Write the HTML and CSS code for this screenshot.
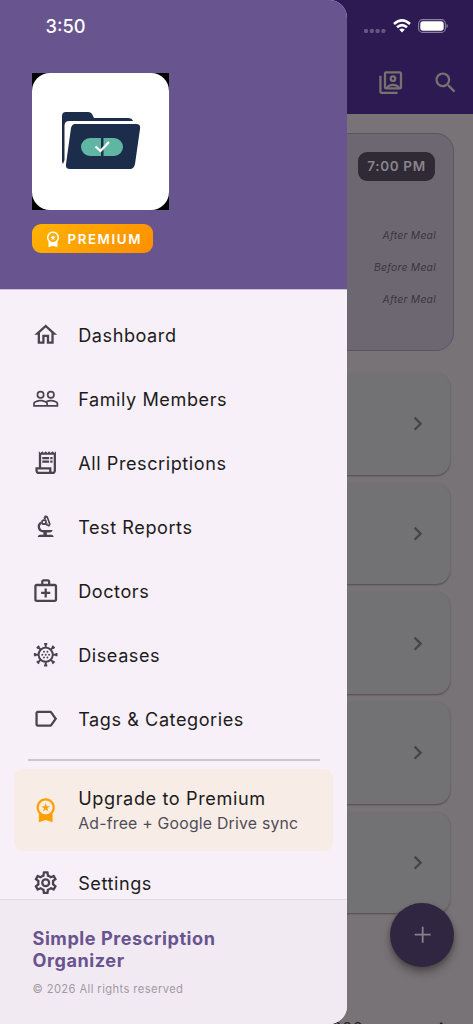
FILE: index.html
```html
<!DOCTYPE html>
<html lang="en">
<head>
<meta charset="utf-8">
<title>Simple Prescription Organizer</title>
<link rel="stylesheet" href="styles.css">
</head>
<body>
<svg class="defs" aria-hidden="true">
  <symbol id="chevron" viewBox="0 0 24 24"><path d="M10 6L8.590 7.410 13.170 12l-4.580 4.590L10 18l6-6z"/></symbol>
  <symbol id="award" viewBox="0 0 24 24"><path d="M9.680 13.690L12 11.930l2.310 1.760-.88-2.850L15.750 9h-2.840L12 6.190 11.090 9H8.250l2.310 1.840-.88 2.850zM20 10c0-4.420-3.580-8-8-8s-8 3.580-8 8c0 2.030.76 3.870 2 5.280V23l6-2 6 2v-7.720c1.240-1.410 2-3.250 2-5.280zm-8-6c3.310 0 6 2.690 6 6s-2.690 6-6 6-6-2.690-6-6 2.690-6 6-6z"/></symbol>
</svg>
<div class="phone">
  <main class="app">
    <header class="appbar">
      <svg class="icon" viewBox="0 0 24 24"><path d="M4 6H2v14c0 1.100.9 2 2 2h14v-2H4z"/><g fill="none" stroke="currentColor" stroke-width="2"><rect x="7" y="3" width="14" height="14" rx="1"/><circle cx="14" cy="8.500" r="2"/><path d="M8.500 17c1.200-2 3.200-3 5.500-3s4.300 1 5.500 3"/></g></svg>
      <svg class="icon" viewBox="0 0 24 24"><path d="M15.500 14h-.79l-.28-.27A6.471 6.471 0 0 0 16 9.500 6.500 6.500 0 1 0 9.500 16c1.610 0 3.090-.59 4.230-1.570l.27.28v.79l5 4.990L20.490 19l-4.990-5zm-6 0C7.010 14 5 11.990 5 9.500S7.010 5 9.500 5 14 7.010 14 9.500 11.990 14 9.500 14z"/></svg>
    </header>
    <section class="dose-card">
      <span class="time">7:00 PM</span>
      <ul class="doses"><li>After Meal</li><li>Before Meal</li><li>After Meal</li></ul>
    </section>
    <section class="cards">
      <div class="card"><svg class="icon"><use href="#chevron"/></svg></div>
      <div class="card"><svg class="icon"><use href="#chevron"/></svg></div>
      <div class="card"><svg class="icon"><use href="#chevron"/></svg></div>
      <div class="card"><svg class="icon"><use href="#chevron"/></svg></div>
      <div class="card"><svg class="icon"><use href="#chevron"/></svg></div>
    </section>
    <div class="date-row"><span>2026</span><svg class="icon"><use href="#chevron"/></svg></div>
  </main>
  <div class="fab"><svg class="icon" viewBox="0 0 24 24"><path d="M19 12.800h-6.200V19h-1.600v-6.200H5v-1.600h6.200V5h1.600v6.200H19z"/></svg></div>

  <aside class="drawer">
    <header class="drawer-head">
      <div class="logo">
        <svg viewBox="0 0 137 137">
          <rect width="137" height="137" rx="18" fill="#fff"/>
          <path d="M31 91q-1-1-1-3V43q0-4 4-4h22q3 0 4 2l2 4h34q4 0 5 3H37q-4 0-4.500 4V87z" fill="#1c2d4b"/>
          <path d="M43 51h61q5 0 4 5l-5 35q-1 5-5 5H38q-5 0-4-5l5-36q1-4 4-4z" fill="#1c2d4b"/>
          <path d="M58 65h11v18H58a9 9 0 0 1 0-18zm13.500 0H82a9 9 0 0 1 0 18H71.500z" fill="#60b6a2"/>
          <path d="M63.500 73.500l5 4.500 8.500-9" fill="none" stroke="#fff" stroke-width="2.300"/>
        </svg>
      </div>
      <div class="badge"><svg><use href="#award"/></svg><span>PREMIUM</span></div>
    </header>
    <nav class="menu">
      <a class="item"><svg class="icon" viewBox="0 0 24 24"><path d="M12 5.690l5 4.500V18h-2v-6H9v6H7v-7.810l5-4.500M12 3L2 12h3v8h6v-6h2v6h6v-8h3L12 3z"/></svg><span>Dashboard</span></a>
      <a class="item"><svg class="icon" viewBox="0 0 24 24"><path d="M16.500 13c-1.200 0-3.070.34-4.500 1-1.430-.67-3.300-1-4.500-1C5.330 13 1 14.080 1 16.250V19h22v-2.750c0-2.170-4.330-3.250-6.500-3.250zm-4 4.500h-10v-1.250c0-.54 2.560-1.750 5-1.750s5 1.210 5 1.750v1.250zm9 0H14v-1.250c0-.46-.2-.86-.52-1.220.88-.3 1.960-.53 3.020-.53 2.440 0 5 1.210 5 1.750v1.250zM7.500 12a3.500 3.500 0 1 0 0-7 3.500 3.500 0 0 0 0 7zm0-5.500a2 2 0 1 1 0 4 2 2 0 0 1 0-4zm9 5.500a3.500 3.500 0 1 0 0-7 3.500 3.500 0 0 0 0 7zm0-5.500a2 2 0 1 1 0 4 2 2 0 0 1 0-4z"/></svg><span>Family Members</span></a>
      <a class="item"><svg class="icon" viewBox="0 0 24 24"><path d="M19.500 3.500L18 2l-1.500 1.500L15 2l-1.500 1.500L12 2l-1.500 1.500L9 2 7.500 3.500 6 2v14H3v3c0 1.660 1.340 3 3 3h12c1.660 0 3-1.340 3-3V2l-1.500 1.500zM15 20H6c-.55 0-1-.45-1-1v-1h10v2zm4-1c0 .55-.45 1-1 1s-1-.45-1-1v-3H8V5h11v14zM9 7h6v2H9zM16 7h2v2h-2zM9 10h6v2H9zM16 10h2v2h-2z"/></svg><span>All Prescriptions</span></a>
      <a class="item"><svg class="icon" viewBox="0 0 24 24"><path d="M7 19c-1.100 0-2 .9-2 2h14c0-1.100-.9-2-2-2h-4v-2h3c1.100 0 2-.9 2-2h-8c-1.660 0-3-1.340-3-3 0-1.090.59-2.040 1.460-2.560C8.170 9.030 8 8.540 8 8c0-.21.04-.42.09-.62A5 5 0 0 0 10 17v2z"/><path fill-rule="evenodd" d="M10.560 5.510A2.500 2.500 0 0 1 12.150 9.870l.59 1.620.94-.34.34.94 1.880-.68-.34-.94.94-.34L13.760 2.600l-.94.34L12.480 2l-1.880.68.34.94-.94.35zM11.900 4.600l.94-.34 2.050 5.640-.94.34z"/><path fill-rule="evenodd" d="M10.500 5.500a2.500 2.500 0 1 0 0 5 2.500 2.500 0 0 0 0-5zm0 1.500a1 1 0 1 1 0 2 1 1 0 0 1 0-2z"/></svg><span>Test Reports</span></a>
      <a class="item"><svg class="icon" viewBox="0 0 24 24"><path d="M20 6h-4V4c0-1.100-.9-2-2-2h-4c-1.100 0-2 .9-2 2v2H4c-1.100 0-2 .9-2 2v12c0 1.100.9 2 2 2h16c1.100 0 2-.9 2-2V8c0-1.100-.9-2-2-2zM10 4h4v2h-4V4zm10 16H4V8h16v12zM13 10h-2v3H8v2h3v3h2v-3h3v-2h-3z"/></svg><span>Doctors</span></a>
      <a class="item"><svg class="icon" viewBox="0 0 24 24"><g fill="none" stroke="currentColor" stroke-width="1.700"><circle cx="12" cy="12" r="6.200"/><path d="M12 6V2.500M12 18v3.500M6 12H2.500M18 12h3.500M7.800 7.800L5.300 5.300M16.200 7.800l2.500-2.500M7.800 16.200l-2.500 2.500M16.200 16.200l2.500 2.500M10.600 2.500h2.800M10.600 21.500h2.800M2.500 10.600v2.800M21.500 10.600v2.800M4.300 6.300l2-2M17.700 4.300l2 2M4.300 17.700l2 2M17.700 19.700l2-2"/></g><circle cx="12" cy="12" r=".85"/><circle cx="9" cy="12" r=".85"/><circle cx="15" cy="12" r=".85"/><circle cx="10.500" cy="9.500" r=".85"/><circle cx="13.500" cy="9.500" r=".85"/><circle cx="10.500" cy="14.500" r=".85"/><circle cx="13.500" cy="14.500" r=".85"/></svg><span>Diseases</span></a>
      <a class="item"><svg class="icon" viewBox="0 0 24 24"><path d="M17.630 5.840C17.270 5.330 16.670 5 16 5L5 5.010C3.900 5.010 3 5.900 3 7v10c0 1.100.9 1.990 2 1.990L16 19c.67 0 1.270-.33 1.630-.84L22 12l-4.370-6.160zM16 17H5V7h11l3.550 5L16 17z"/></svg><span>Tags &amp; Categories</span></a>
      <hr class="divider">
      <a class="upgrade"><svg class="icon"><use href="#award"/></svg><div><span class="up-title">Upgrade to Premium</span><span class="up-sub">Ad-free + Google Drive sync</span></div></a>
      <a class="item"><svg class="icon" viewBox="0 0 24 24"><path d="M19.430 12.980c.04-.32.07-.64.07-.98 0-.34-.03-.66-.07-.98l2.110-1.650c.19-.15.24-.42.12-.64l-2-3.460c-.09-.16-.26-.25-.44-.25-.06 0-.12.01-.17.03l-2.490 1c-.52-.4-1.080-.73-1.690-.98l-.38-2.650C14.460 2.180 14.250 2 14 2h-4c-.25 0-.46.18-.49.42l-.38 2.650c-.61.25-1.170.59-1.690.98l-2.490-1c-.06-.02-.12-.03-.18-.03-.17 0-.34.09-.43.25l-2 3.460c-.13.22-.07.49.12.64l2.110 1.650c-.04.32-.07.65-.07.98 0 .33.03.66.07.98l-2.110 1.650c-.19.15-.24.42-.12.64l2 3.460c.09.16.26.25.44.25.06 0 .12-.01.17-.03l2.490-1c.52.4 1.080.73 1.690.98l.38 2.650c.03.24.24.42.49.42h4c.25 0 .46-.18.49-.42l.38-2.650c.61-.25 1.170-.59 1.690-.98l2.490 1c.06.02.12.03.18.03.17 0 .34-.09.43-.25l2-3.460c.12-.22.07-.49-.12-.64l-2.110-1.650zm-1.980-1.710c.04.31.05.52.05.73 0 .21-.02.43-.05.73l-.14 1.130.89.7 1.080.84-.7 1.210-1.270-.51-1.040-.42-.9.68c-.43.32-.84.56-1.250.73l-1.060.43-.16 1.130-.2 1.350h-1.400l-.19-1.350-.16-1.130-1.060-.43c-.43-.18-.83-.41-1.230-.71l-.91-.7-1.060.43-1.270.51-.7-1.210 1.080-.84.89-.7-.14-1.130c-.03-.31-.05-.54-.05-.74s.02-.43.05-.73l.14-1.130-.89-.7-1.080-.84.7-1.210 1.270.51 1.040.42.9-.68c.43-.32.84-.56 1.250-.73l1.060-.43.16-1.130.2-1.350h1.390l.19 1.350.16 1.130 1.060.43c.43.18.83.41 1.230.71l.91.7 1.060-.43 1.270-.51.7 1.210-1.070.85-.89.7.14 1.130zM12 8a4 4 0 1 0 0 8 4 4 0 0 0 0-8zm0 6a2 2 0 1 1 0-4 2 2 0 0 1 0 4z"/></svg><span>Settings</span></a>
    </nav>
    <footer class="drawer-foot">
      <strong>Simple Prescription Organizer</strong>
      <small>© 2026 All rights reserved</small>
    </footer>
  </aside>

  <div class="statusbar">
    <span class="clock">3:50</span>
    <div class="signals">
      <svg class="dots" viewBox="0 0 22 4"><rect width="4" height="4" rx="1.300"/><rect x="5.800" width="4" height="4" rx="1.300"/><rect x="11.600" width="4" height="4" rx="1.300"/><rect x="17.400" width="4" height="4" rx="1.300"/></svg>
      <svg class="wifi" viewBox="0 0 18 14"><g fill="none" stroke="#fff" stroke-width="2.600"><path d="M1 5Q9-2.200 17 5"/><path d="M4 8.300q5-4.300 10 0"/></g><path d="M6.200 10.600q2.800-2.200 5.600 0L9 13.600z" fill="#fff"/></svg>
      <svg class="battery" viewBox="0 0 30 14"><rect x=".6" y=".6" width="26.800" height="12.800" rx="4" fill="none" stroke="#8c80a0" stroke-width="1.100"/><rect x="2.300" y="2.300" width="23.400" height="9.400" rx="2.700" fill="#fff"/><path d="M28.500 5q1.400.6 1.400 2t-1.400 2z" fill="#8c80a0"/></svg>
    </div>
  </div>
</div>
</body>
</html>
```
FILE: styles.css
```css
* { box-sizing: border-box; }
body { margin: 0; font-family: Inter, "Liberation Sans", sans-serif; }
.defs { position: absolute; width: 0; height: 0; }
.phone { position: relative; width: 473px; height: 1024px; overflow: hidden; background: #787376; }
.icon { width: 27.4px; height: 27.4px; flex: none; fill: currentColor; display: block; }

.app { height: 1024px; overflow: hidden; }
.appbar { height: 114px; padding: 68.5px 14px 0 0; display: flex; justify-content: flex-end; gap: 27px; background: #2e1a52; color: #77716f; }
.dose-card { margin: 19px 19px 0; height: 218px; padding: 18px 18px 0; border: 1px solid #5b5464; border-radius: 18px; background: #6d6772; display: flex; flex-direction: column; align-items: flex-end; }
.time { width: 77px; height: 29px; border-radius: 9px; background: #302a36; color: #89858a; font-size: 13.5px; line-height: 29px; font-weight: 600; text-align: center; letter-spacing: .65px; }
.doses { list-style: none; margin: 38px -1px 0 0; padding: 0; text-align: right; font-size: 10.3px; line-height: 32px; font-style: italic; letter-spacing: .28px; color: #393739; }
.cards { margin: 22.3px 23px 0; display: flex; flex-direction: column; gap: 8.1px; }
.card { height: 101.5px; border-radius: 14px; background: #727174; box-shadow: 0 1px 2px rgba(0,0,0,.35); display: flex; align-items: center; justify-content: flex-end; padding-right: 18.5px; color: #454446; }
.date-row { margin: 103px 18px 0 0; display: flex; justify-content: flex-end; align-items: center; color: #252326; font-size: 16px; line-height: 24px; letter-spacing: .5px; gap: 68px; }
.date-row .icon { width: 24px; height: 24px; }
.fab { position: absolute; left: 390.3px; top: 902.5px; width: 64px; height: 64px; border-radius: 50%; background: #302641; color: #86818a; display: flex; align-items: center; justify-content: center; box-shadow: 0 6px 10px rgba(0,0,0,.28), 0 2px 4px rgba(0,0,0,.2); }

.drawer { position: absolute; left: 0; top: 0; width: 347.3px; height: 1024px; border-radius: 0 18px 18px 0; overflow: hidden; background: #f7f0f8; display: flex; flex-direction: column; color: #1d1b20; }
.drawer-head { height: 289.5px; flex: none; background: #68548e; border-bottom: 1px solid #cbbcdc; padding: 73px 0 0 32px; }
.logo { width: 137px; height: 137px; background: #000; }
.logo svg { display: block; width: 137px; height: 137px; }
.badge { margin-top: 14px; width: 121px; height: 29px; border-radius: 9px; background: linear-gradient(135deg, #ffb300, #ff8f00); color: #fff; display: flex; align-items: center; gap: 5.5px; padding-left: 12px; font-size: 13.3px; font-weight: 600; letter-spacing: 1.6px; }
.badge svg { width: 18px; height: 18px; fill: currentColor; flex: none; }
.menu { flex: 1; min-height: 0; overflow: hidden; padding-top: 13.5px; }
.item { height: 64px; padding-left: 32.3px; display: flex; align-items: center; gap: 18.5px; font-size: 18.1px; letter-spacing: .56px; }
.item .icon { color: #49454f; }
.item span { white-space: nowrap; }
.divider { margin: 8px 27.5px 0 28px; border: 0; height: 1.5px; background: #cdc5d0; }
.upgrade { margin: 8.5px 14px 0; height: 82px; border-radius: 9px; background: #f8ece6; display: flex; align-items: center; gap: 18.5px; padding-left: 18.3px; white-space: nowrap; }
.upgrade .icon { color: #ffa000; }
.up-title, .up-sub { display: block; }
.up-title { font-size: 18.1px; line-height: 27px; letter-spacing: .62px; }
.up-sub { font-size: 15.8px; line-height: 23px; letter-spacing: .22px; color: #504c56; }
.drawer-foot { height: 125px; flex: none; border-top: 1px solid #e0dae2; background: #f2eaf3; padding: 27px 100px 0 32.5px; }
.drawer-foot strong { display: block; font-size: 18.1px; line-height: 22px; font-weight: 700; color: #68548e; letter-spacing: .55px; }
.drawer-foot small { display: block; margin-top: 11px; font-size: 11.2px; line-height: 14px; color: #a09ba2; letter-spacing: .4px; white-space: nowrap; }

.statusbar { position: absolute; left: 0; top: 0; width: 473px; height: 52px; display: flex; align-items: center; justify-content: space-between; padding: 0 25px 0 45.5px; color: #fff; }
.clock { font-size: 18.3px; font-weight: 500; letter-spacing: 0; }
.signals { display: flex; align-items: center; gap: 7px; }
.dots { width: 22px; height: 4px; margin-top: 9px; fill: #655581; }
.wifi { width: 18px; height: 14px; }
.battery { width: 30px; height: 14px; }
```
